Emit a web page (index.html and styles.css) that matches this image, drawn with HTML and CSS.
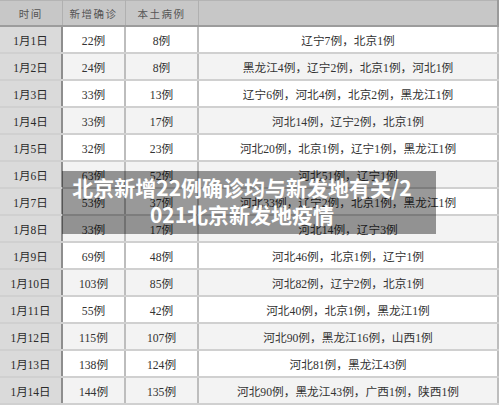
FILE: index.html
```html
<!DOCTYPE html>
<html>
<head>
<meta charset="utf-8">
<link rel="stylesheet" href="styles.css">
</head>
<body>
<div class="frame">
  <table class="data">
    <colgroup>
      <col class="c1"><col class="c2"><col class="c3"><col class="c4">
    </colgroup>
    <thead>
      <tr><th>时间</th><th>新增确诊</th><th>本土病例</th><th></th></tr>
    </thead>
    <tbody>
      <tr><td>1月1日</td><td>22例</td><td>8例</td><td>辽宁7例，北京1例</td></tr>
      <tr><td>1月2日</td><td>24例</td><td>8例</td><td>黑龙江4例，辽宁2例，北京1例，河北1例</td></tr>
      <tr><td>1月3日</td><td>33例</td><td>13例</td><td>辽宁6例，河北4例，北京2例，黑龙江1例</td></tr>
      <tr><td>1月4日</td><td>33例</td><td>17例</td><td>河北14例，辽宁2例，北京1例</td></tr>
      <tr><td>1月5日</td><td>32例</td><td>23例</td><td>河北20例，北京1例，辽宁1例，黑龙江1例</td></tr>
      <tr><td>1月6日</td><td>63例</td><td>52例</td><td>河北51例，辽宁1例</td></tr>
      <tr><td>1月7日</td><td>53例</td><td>37例</td><td>河北33例，辽宁2例，北京1例，黑龙江1例</td></tr>
      <tr><td>1月8日</td><td>33例</td><td>17例</td><td>河北14例，辽宁3例</td></tr>
      <tr><td>1月9日</td><td>69例</td><td>48例</td><td>河北46例，北京1例，辽宁1例</td></tr>
      <tr><td>1月10日</td><td>103例</td><td>85例</td><td>河北82例，辽宁2例，北京1例</td></tr>
      <tr><td>1月11日</td><td>55例</td><td>42例</td><td>河北40例，北京1例，黑龙江1例</td></tr>
      <tr><td>1月12日</td><td>115例</td><td>107例</td><td>河北90例，黑龙江16例，山西1例</td></tr>
      <tr><td>1月13日</td><td>138例</td><td>124例</td><td>河北81例，黑龙江43例</td></tr>
      <tr><td>1月14日</td><td>144例</td><td>135例</td><td>河北90例，黑龙江43例，广西1例，陕西1例</td></tr>
    </tbody>
  </table>
  <div class="caption">北京新增22例确诊均与新发地有关/2<br>021北京新发地疫情</div>
</div>
</body>
</html>
```

FILE: styles.css
```css
html, body {
  margin: 0;
  padding: 0;
  background: #ffffff;
}

.frame {
  position: relative;
  width: 500px;
  height: 406px;
  overflow: hidden;
}

.data {
  width: 498px;
  table-layout: fixed;
  border-collapse: collapse;
  font-family: "Liberation Serif", "Noto Sans CJK SC", serif;
  font-size: 11.7px;
  color: #333333;
  border-top: 1px solid #b4b4b4;
  border-right: 2px solid #9a9a9a;
}

.c1 { width: 62px; }
.c2 { width: 63px; }
.c3 { width: 73px; }
.c4 { width: 300px; }

.data th {
  height: 24px;
  padding: 0;
  background: #c7c7c7;
  border-bottom: 2px solid #9c9c9c;
  border-right: 1px solid #b0b0b0;
  font-weight: normal;
  font-size: 10.5px;
  letter-spacing: 1.5px;
  color: #555555;
  text-align: center;
}

.data td {
  height: 25px;
  padding: 0;
  text-align: center;
  border-bottom: 2px solid #d0d0d0;
  border-right: 2px solid #bdbdbd;
  white-space: nowrap;
}

.data tbody tr:nth-child(odd) td { background: #ffffff; }
.data tbody tr:nth-child(even) td { background: #f3f3f3; }

.data tbody tr td:first-child {
  background: #dadada;
  border-right: 2px solid #8e8e8e;
  color: #2a2a2a;
  font-size: 11.5px;
}

.caption {
  position: absolute;
  left: 62px;
  top: 171px;
  width: 360px;
  height: 56px;
  padding: 3px 14px 4px 0;
  background: rgba(0, 0, 0, 0.4);
  color: #ffffff;
  font-family: "Noto Sans CJK SC", "Noto Sans", sans-serif;
  font-weight: bold;
  font-size: 21px;
  line-height: 27px;
  text-align: center;
  white-space: nowrap;
}
```
